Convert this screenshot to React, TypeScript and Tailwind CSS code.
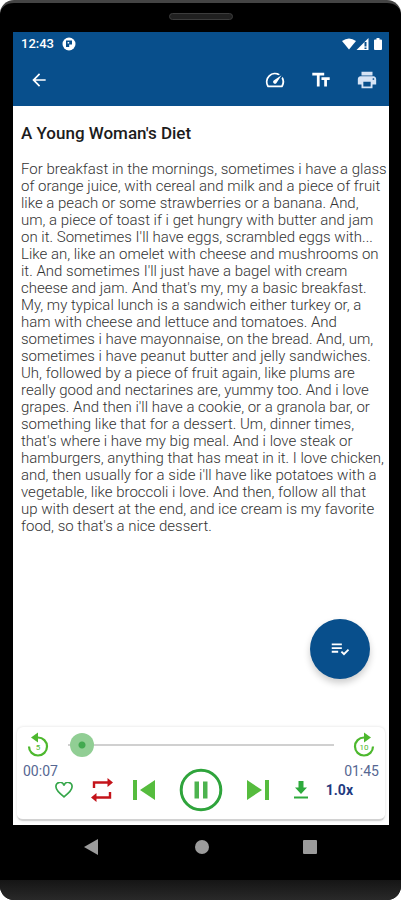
import React from "react"
import { MdArrowBack, MdPlaylistAddCheck, MdPrint, MdSpeed, MdTextFields } from "react-icons/md"

const transcript = [
    "For breakfast in the mornings, sometimes i have a glass",
    "of orange juice, with cereal and milk and a piece of fruit",
    "like a peach or some strawberries or a banana. And,",
    "um, a piece of toast if i get hungry with butter and jam",
    "on it. Sometimes I'll have eggs, scrambled eggs with...",
    "Like an, like an omelet with cheese and mushrooms on",
    "it. And sometimes I'll just have a bagel with cream",
    "cheese and jam. And that's my, my a basic breakfast.",
    "My, my typical lunch is a sandwich either turkey or, a",
    "ham with cheese and lettuce and tomatoes. And",
    "sometimes i have mayonnaise, on the bread. And, um,",
    "sometimes i have peanut butter and jelly sandwiches.",
    "Uh, followed by a piece of fruit again, like plums are",
    "really good and nectarines are, yummy too. And i love",
    "grapes. And then i'll have a cookie, or a granola bar, or",
    "something like that for a dessert. Um, dinner times,",
    "that's where i have my big meal. And i love steak or",
    "hamburgers, anything that has meat in it. I love chicken,",
    "and, then usually for a side i'll have like potatoes with a",
    "vegetable, like broccoli i love. And then, follow all that",
    "up with desert at the end, and ice cream is my favorite",
    "food, so that's a nice dessert.",
]

const StatusBar: React.FC = () => (
    <div className="flex h-6 items-center justify-between pl-2 pr-[5px]">
        <div className="flex items-center gap-2">
            <span className="text-[13px] font-medium">12:43</span>
            <svg className="size-3.5" viewBox="0 0 14 14">
                <circle cx="7" cy="7" r="6.5" fill="#fff" />
                <path d="M4 3.500h6v4H7.200V10H4z" fill="#084f8c" />
                <path d="M5.600 5h1.600v1.500H5.600z" fill="#fff" />
            </svg>
        </div>
        <svg className="h-3.5 w-[42px]" viewBox="0 0 42 14">
            <path d="M0 4Q7-1 14 4L7 12.500z" fill="#fff" />
            <path d="M26.500 1v12H14.500z" fill="#fff" />
            <path d="M22.500 5h2v4.500h-2zM22.500 10.500h2V12h-2z" fill="#084f8c" />
            <path d="M34.500 1h3v1.500H39a1 1 0 0 1 1 1V12a1 1 0 0 1-1 1h-6a1 1 0 0 1-1-1V3.500a1 1 0 0 1 1-1h1.500z" fill="#fff" />
        </svg>
    </div>
)

const AppBar: React.FC = () => (
    <div className="flex h-12 items-center justify-between pl-4 pr-[11px]">
        <button type="button" aria-label="Back">
            <MdArrowBack className="size-5" />
        </button>
        <div className="flex items-center gap-6">
            <button type="button" aria-label="Speed">
                <MdSpeed className="size-[22px]" />
            </button>
            <button type="button" aria-label="Text size">
                <MdTextFields className="size-[22px]" />
            </button>
            <button type="button" aria-label="Print" className="text-[#d6e3f5]">
                <MdPrint className="size-[22px]" />
            </button>
        </div>
    </div>
)

const SkipIcon: React.FC<{ label: string; forward?: boolean }> = ({ label, forward }) => (
    <svg className="h-[26px] w-[22px]" viewBox="0 0 22 26">
        <g transform={forward ? "matrix(-1 0 0 1 22 0)" : undefined}>
            <path d="M2 14.500a9 9 0 1 0 9-9H9" fill="none" stroke="#4db82e" strokeWidth="2.200" />
            <path d="M4 5.500L11 .5v10z" fill="#4db82e" />
        </g>
        <text x="11" y="18" textAnchor="middle" fontSize="8" fill="#4db82e">
            {label}
        </text>
    </svg>
)

const Player: React.FC = () => (
    <div className="mx-1 mb-1 rounded-md border-b-2 border-[#d2d2d2] bg-white px-1.5 pb-[5px] shadow-[0_0_3px_rgba(0,0,0,0.14)]">
        <div className="flex h-9 items-center justify-between px-1">
            <button type="button" aria-label="Back 5 seconds">
                <SkipIcon label="5" />
            </button>
            <input
                type="range"
                aria-label="Position"
                min={0}
                max={105}
                defaultValue={1}
                className="mx-[19px] h-6 min-w-0 flex-1 appearance-none bg-transparent [&::-webkit-slider-runnable-track]:h-0.5 [&::-webkit-slider-runnable-track]:bg-[#d0d0d0] [&::-webkit-slider-thumb]:-mt-[11px] [&::-webkit-slider-thumb]:size-6 [&::-webkit-slider-thumb]:appearance-none [&::-webkit-slider-thumb]:rounded-full [&::-webkit-slider-thumb]:bg-[radial-gradient(circle,#43a950_3px,#91ce94_4px)]"
            />
            <button type="button" aria-label="Forward 10 seconds">
                <SkipIcon label="10" forward />
            </button>
        </div>
        <div className="flex h-4 items-center justify-between text-sm text-[#566792]">
            <span>00:07</span>
            <span>01:45</span>
        </div>
        <div className="-mt-[13px] flex h-12 items-center justify-between pl-8 pr-[26px]">
            <div className="flex items-center gap-5">
                <div className="flex items-center gap-[18px]">
                    <button type="button" aria-label="Favorite">
                        <svg className="h-4 w-[18px]" viewBox="0 0 18 16" fill="none" stroke="#35a64a" strokeWidth="1.700">
                            <path d="M9 14.800C3.500 10.500 1 8 1 5a4 4 0 0 1 8-1.300A4 4 0 0 1 17 5c0 3-2.500 5.500-8 9.800z" />
                        </svg>
                    </button>
                    <button type="button" aria-label="Repeat">
                        <svg className="h-6 w-[22px]" viewBox="0 0 22 24">
                            <path d="M3 10V4.500h14M19 14v5.500H5" fill="none" stroke="#c4141b" strokeWidth="2.400" />
                            <path d="M16.500 0L22 4.500 16.500 9zM5.500 15L0 19.500 5.500 24z" fill="#c4141b" />
                        </svg>
                    </button>
                </div>
                <div className="flex items-center gap-6">
                    <button type="button" aria-label="Previous">
                        <svg className="h-[22px] w-[22px]" viewBox="0 0 22 22" fill="#56bc3e">
                            <path d="M0 1h4v20H0zM22 1v20L7 11z" />
                        </svg>
                    </button>
                    <button type="button" aria-label="Pause">
                        <svg className="size-11" viewBox="0 0 44 44">
                            <circle cx="22" cy="22" r="19.800" fill="none" stroke="#2fa43c" strokeWidth="3" />
                            <path d="M15.500 13.500h4.500v17h-4.500zM24 13.500h4.500v17H24z" fill="#4cb34f" />
                        </svg>
                    </button>
                    <button type="button" aria-label="Next">
                        <svg className="h-[22px] w-[22px]" viewBox="0 0 22 22" fill="#56bc3e">
                            <path d="M18 1h4v20h-4zM0 1v20l15-10z" />
                        </svg>
                    </button>
                </div>
            </div>
            <div className="flex items-center gap-[18px]">
                <button type="button" aria-label="Download">
                    <svg className="h-[18px] w-3.5" viewBox="0 0 14 18" fill="#2eaa3c">
                        <path d="M4.500 0h5v6.500H13L7 13 1 6.500h3.500zM0 15.500h14v2H0z" />
                    </svg>
                </button>
                <button type="button" className="text-sm font-bold text-[#1f3a80]">
                    1.0x
                </button>
            </div>
        </div>
    </div>
)

const NavBar: React.FC = () => (
    <div className="flex h-[55px] items-center justify-between px-[84px] pb-3">
        <button type="button" aria-label="Back">
            <svg className="size-4" viewBox="0 0 16 16" fill="#9b9b9b">
                <path d="M0 8L14 0v16z" />
            </svg>
        </button>
        <button type="button" aria-label="Home" className="size-3.5 rounded-full bg-[#9b9b9b]" />
        <button type="button" aria-label="Recents" className="size-3.5 rounded-[1px] bg-[#9b9b9b]" />
    </div>
)

const App: React.FC = () => {
    return (
        <div className="bg-white font-['Roboto',sans-serif]">
            <div className="flex min-h-screen flex-col overflow-hidden rounded-[14px] border-t-3 border-[#444] bg-black">
                <div className="flex h-[29px] items-center justify-center pb-0.5">
                    <div className="h-[7px] w-16 rounded-full border border-[#3c3c3c] bg-[#202020]" />
                </div>
                <div className="relative mr-3 ml-[13px] flex flex-1 flex-col bg-white">
                    <header className="bg-[#084f8c] pb-0.5 text-white">
                        <StatusBar />
                        <AppBar />
                    </header>
                    <main className="flex-1 px-2 pt-[15px]">
                        <h1 className="text-[17px] leading-6 font-medium text-[#1c1c1c]">A Young Woman's Diet</h1>
                        <p className="mt-4 text-[15px] leading-[17px] font-light whitespace-pre text-[#333]">{transcript.join("\n")}</p>
                    </main>
                    <button
                        type="button"
                        aria-label="Add to playlist"
                        className="absolute right-[19px] bottom-[146px] flex size-[60px] items-center justify-center rounded-full bg-[#084f8c] text-white shadow-[0_4px_7px_rgba(0,0,0,0.2)]"
                    >
                        <MdPlaylistAddCheck className="size-[22px]" />
                    </button>
                    <Player />
                </div>
                <NavBar />
                <div className="h-5 bg-linear-to-b from-[#151515] to-[#292929]" />
            </div>
        </div>
    )
}
export default App
